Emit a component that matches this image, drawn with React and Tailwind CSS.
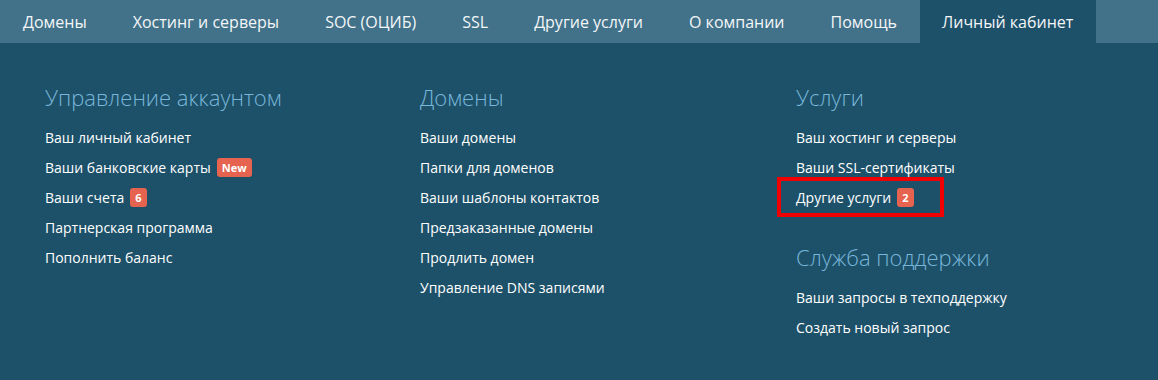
import React from "react";

const nav = [
  "Домены",
  "Хостинг и серверы",
  "SOC (ОЦИБ)",
  "SSL",
  "Другие услуги",
  "О компании",
  "Помощь",
];

function Badge({ children }) {
  return (
    <span className="ml-[6px] inline-flex h-[19px] items-center rounded-[3px] bg-[#e5634f] px-[5px] text-[11px] font-bold leading-none text-white">
      {children}
    </span>
  );
}

function Heading({ children, className = "" }) {
  return (
    <h3 className={`text-[22px] font-light leading-[32px] text-[#78b6da] mb-[9px] ${className}`}>
      {children}
    </h3>
  );
}

function Item({ children, badge, marked }) {
  return (
    <li className="flex h-[30px] items-center text-[14px] text-white">
      <span className="relative flex items-center">
        {children}
        {badge && <Badge>{badge}</Badge>}
        {marked && (
          <span className="absolute left-[-19px] top-[-10px] h-[40px] w-[167px] border-4 border-[#f00000]" />
        )}
      </span>
    </li>
  );
}

export default function App() {
  return (
    <div
      className="w-[1158px] h-[380px] bg-[#1d5169] overflow-hidden"
      style={{ fontFamily: '"Open Sans", "Liberation Sans", sans-serif' }}
    >
      <nav className="flex h-[43px] bg-[#41728a] text-[16px] text-[#f4f6f8]">
        {nav.map((n) => (
          <a key={n} className="flex items-center px-[23px]">
            {n}
          </a>
        ))}
        <a className="flex items-center bg-[#1d5169] pl-[22px] pr-[23px]">Личный кабинет</a>
      </nav>

      <div className="grid grid-cols-[375px_376px_1fr] pl-[45px] pt-[38px]">
        <div>
          <Heading>Управление аккаунтом</Heading>
          <ul>
            <Item>Ваш личный кабинет</Item>
            <Item badge="New">Ваши банковские карты</Item>
            <Item badge="6">Ваши счета</Item>
            <Item>Партнерская программа</Item>
            <Item>Пополнить баланс</Item>
          </ul>
        </div>
        <div>
          <Heading>Домены</Heading>
          <ul>
            <Item>Ваши домены</Item>
            <Item>Папки для доменов</Item>
            <Item>Ваши шаблоны контактов</Item>
            <Item>Предзаказанные домены</Item>
            <Item>Продлить домен</Item>
            <Item>Управление DNS записями</Item>
          </ul>
        </div>
        <div>
          <Heading>Услуги</Heading>
          <ul>
            <Item>Ваш хостинг и серверы</Item>
            <Item>Ваши SSL-сертификаты</Item>
            <Item badge="2" marked>
              Другие услуги
            </Item>
          </ul>
          <Heading className="mt-[29px]">Служба поддержки</Heading>
          <ul>
            <Item>Ваши запросы в техподдержку</Item>
            <Item>Создать новый запрос</Item>
          </ul>
        </div>
      </div>
    </div>
  );
}
